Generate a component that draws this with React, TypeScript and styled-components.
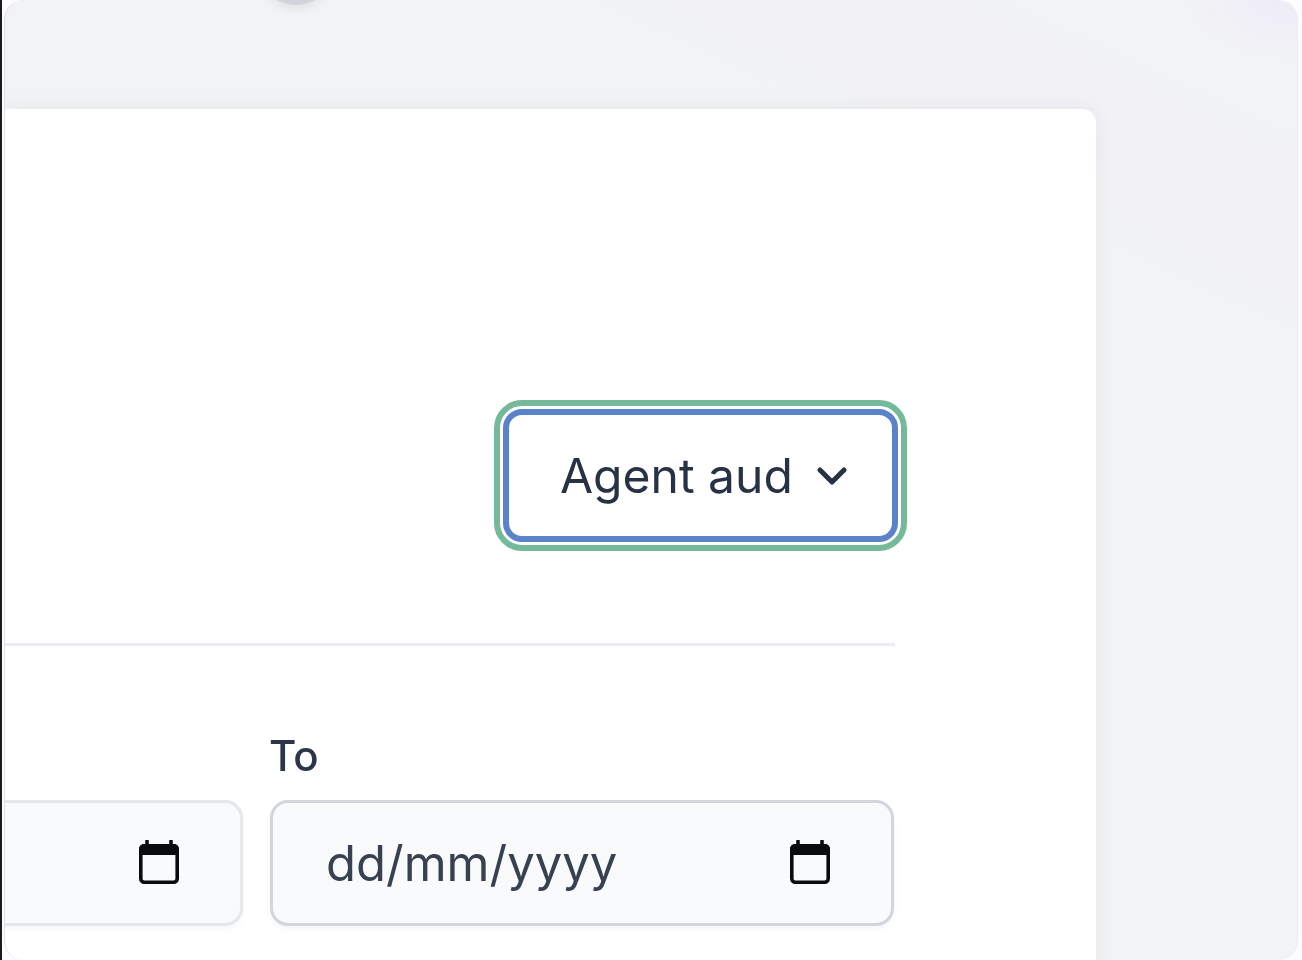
import React from "react";
import styled, { createGlobalStyle } from "styled-components";

const Global = createGlobalStyle`
  html, body { margin: 0; padding: 0; height: 100%; background: #fbfbfd; }
  #root { height: 960px; width: 1302px; overflow: hidden; }
`;

const Screen = styled.div`
  width: 1302px;
  height: 960px;
  box-sizing: border-box;
  padding-right: 4px;
  border-left: 2px solid #1b1b1d;
  background: #fdfcfe;
  overflow: hidden;
`;

const AppWindow = styled.div`
  position: relative;
  box-sizing: border-box;
  height: 960px;
  margin-left: 2px;
  padding-top: 109px;
  border-left: 1px solid #dfdfe6;
  border-right: 1px solid #ecebf1;
  border-radius: 20px;
  overflow: hidden;
  background: #f2f3f5;
  filter: blur(0.6px);
`;

const Glow = styled.div`
  position: absolute;
  inset: 0;
  background:
    radial-gradient(110px 60px at 100% 0%, rgba(238, 233, 248, 0.8) 0%, rgba(242, 243, 245, 0) 100%),
    linear-gradient(205deg, rgba(243, 241, 248, 0) 8%, rgba(243, 241, 248, 0.4) 14%, rgba(243, 241, 248, 0) 22%);
`;

const Avatar = styled.div`
  position: absolute;
  left: 254px;
  top: -69px;
  width: 74px;
  height: 74px;
  border-radius: 50%;
  background: #d2d3da;
  box-shadow: 0 4px 10px rgba(0, 0, 0, 0.07);
`;

const Card = styled.section`
  position: relative;
  box-sizing: border-box;
  width: 1091px;
  height: 900px;
  padding: 300px 0 0;
  background: #fff;
  border-radius: 0 14px 14px 0;
  box-shadow: 0 0 22px rgba(0, 0, 0, 0.06);
`;

const Toolbar = styled.div`
  display: flex;
  justify-content: flex-end;
  width: 890px;
  height: 234px;
`;

const Select = styled.button`
  box-sizing: border-box;
  display: flex;
  align-items: center;
  gap: 24px;
  flex: none;
  width: 395px;
  height: 133px;
  padding: 0 0 0 51px;
  margin-right: -3px;
  background: #fff;
  border: 6px solid #5b83c9;
  border-radius: 19px;
  outline: 6px solid #74b999;
  outline-offset: 3px;
  font: 400 48px/1 Inter, sans-serif;
  color: #283245;
`;

const Divider = styled.hr`
  width: 890px;
  height: 3px;
  margin: 0;
  border: 0;
  background: #ebecef;
`;

const Fields = styled.div`
  display: flex;
  gap: 27px;
  width: 889px;
  padding-top: 89px;
`;

const Field = styled.div<{ $width: number }>`
  width: ${(p) => p.$width}px;
  display: flex;
  flex-direction: column;
  justify-content: flex-end;
`;

const Label = styled.label`
  margin: 0 0 23px -1px;
  font: 500 42px/1 Inter, sans-serif;
  color: #2b3648;
`;

const DateBox = styled.div<{ $focused?: boolean }>`
  box-sizing: border-box;
  display: flex;
  align-items: center;
  justify-content: space-between;
  height: 126px;
  padding: 0 61px 0 53px;
  background: #f9fafb;
  border: 3px solid ${(p) => (p.$focused ? "#d3d5dc" : "#e6e7ea")};
  border-radius: 18px;
  box-shadow: 0 3px 6px rgba(0, 0, 0, 0.04);
  font: 400 49px/1 Inter, sans-serif;
  color: #374151;
`;

const LeftBox = styled(DateBox)`
  border-left: 0;
  border-radius: 0 18px 18px 0;
`;

const CalendarSvg = styled.svg`
  flex: none;
  margin-top: -2px;
`;

const Calendar = () => (
  <CalendarSvg width="40" height="44" viewBox="0 0 40 44" fill="none">
    <path d="M8 1v6M32 1v6" stroke="#0b0b0d" strokeWidth="3.6" strokeLinecap="round" />
    <path d="M5 4h30a5 5 0 0 1 5 5v6H0V9a5 5 0 0 1 5-5z" fill="#0b0b0d" />
    <rect x="1.8" y="5.8" width="36.4" height="36.4" rx="3.5" stroke="#0b0b0d" strokeWidth="3.6" />
  </CalendarSvg>
);

const Chevron = () => (
  <svg width="30" height="20" viewBox="0 0 30 20" fill="none">
    <path d="M3 4l12 12L27 4" stroke="#283245" strokeWidth="5" strokeLinecap="round" strokeLinejoin="round" />
  </svg>
);

export default function App() {
  return (
    <>
      <Global />
      <Screen>
        <AppWindow>
          <Glow />
          <Avatar />
          <Card>
            <Toolbar>
              <Select>
                Agent aud
                <Chevron />
              </Select>
            </Toolbar>
            <Divider />
            <Fields>
              <Field $width={238}>
                <LeftBox>
                  <span />
                  <Calendar />
                </LeftBox>
              </Field>
              <Field $width={624}>
                <Label>To</Label>
                <DateBox $focused>
                  dd/mm/yyyy
                  <Calendar />
                </DateBox>
              </Field>
            </Fields>
          </Card>
        </AppWindow>
      </Screen>
    </>
  );
}
